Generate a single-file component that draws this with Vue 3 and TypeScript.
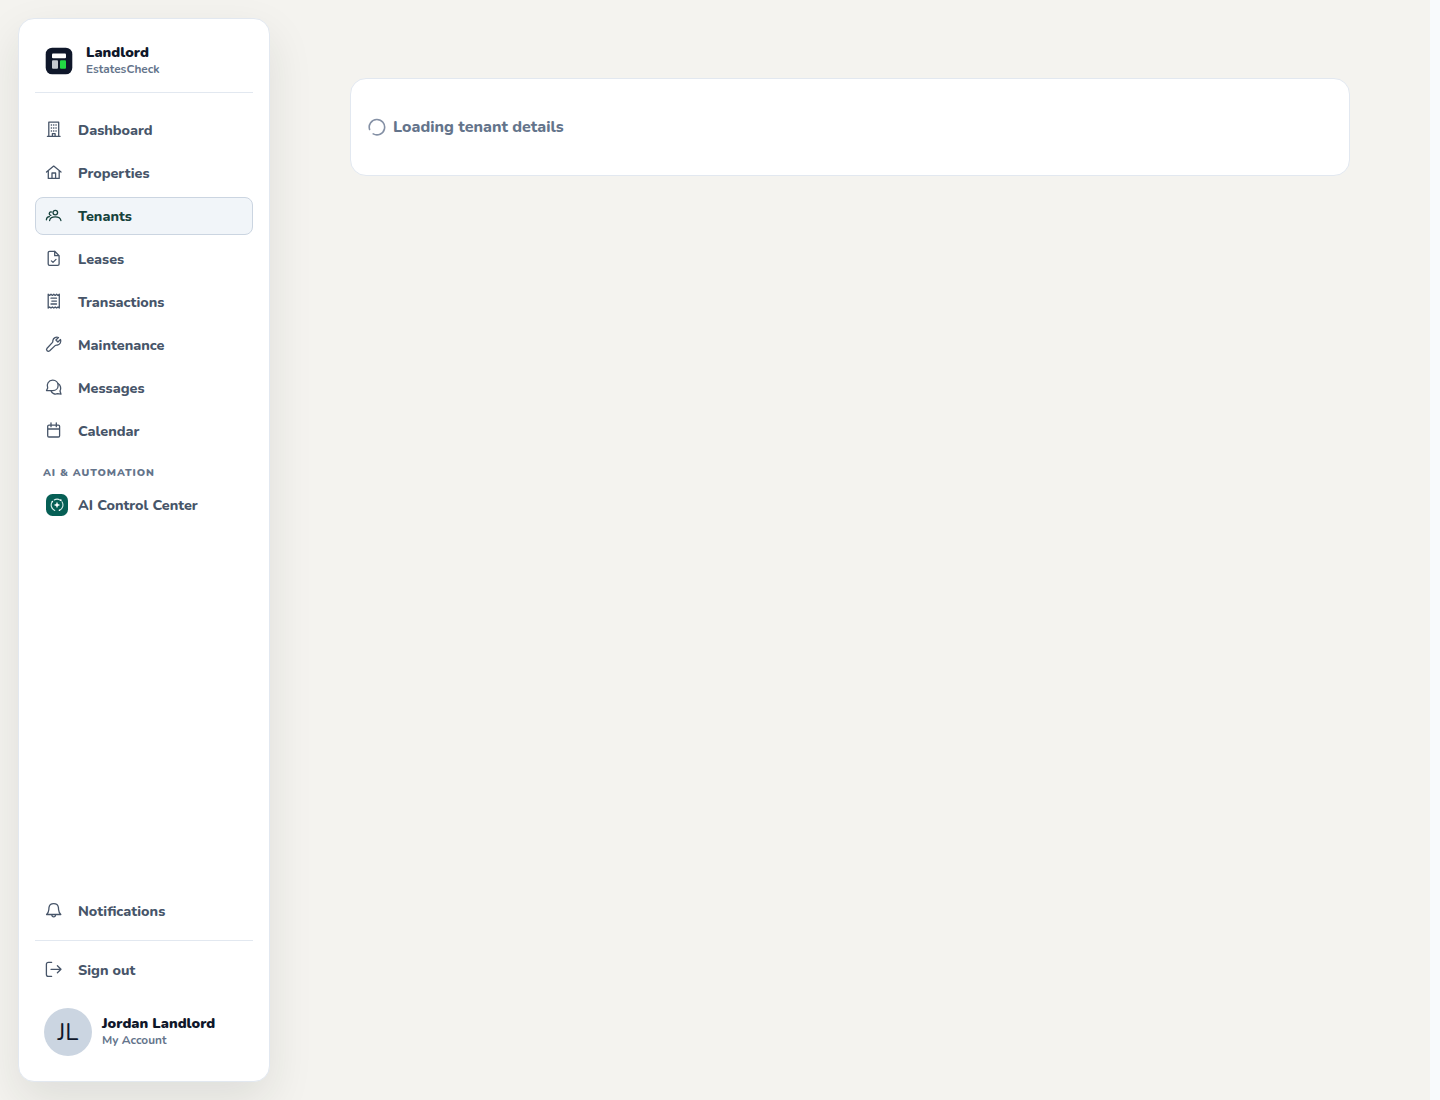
<script setup lang="ts">
interface NavItem {
  label: string
  paths: string[]
  active?: boolean
}

const mainNav: NavItem[] = [
  {
    label: 'Dashboard',
    paths: [
      'M3.8 16V2.2H13.7V16M2.4 16.3H15.1M7.4 16V13.6H10.1V16',
      'M6.3 5H6.6M8.6 5H8.9M10.9 5H11.2M6.3 8H6.6M8.6 8H8.9M10.9 8H11.2M6.3 11H6.6M8.6 11H8.9M10.9 11H11.2',
    ],
  },
  {
    label: 'Properties',
    paths: ['M1.5 9L8.7 3.1L16 9M3.3 7.8V15.4H14.2V7.8M7 15.2V10H10.6V15.2'],
  },
  {
    label: 'Tenants',
    active: true,
    paths: [
      'M12.6 6.6A2.3 2.3 0 1 1 8 6.6A2.3 2.3 0 1 1 12.6 6.6Z',
      'M4.6 14.5C5.2 9.6 15.2 9.6 15.9 14.5M6.6 6C4.8 5.4 3.6 7.2 4.6 8.7C5 9.2 5.4 9.3 5.9 9.3M1.4 13.8C1.5 11.9 2.6 10.8 4.4 10.7',
    ],
  },
  {
    label: 'Leases',
    paths: [
      'M9.7 2.3H4.6C3.7 2.3 3.2 2.9 3.2 3.7V14.9C3.2 15.8 3.8 16.3 4.6 16.3H12.7C13.6 16.3 14.1 15.7 14.1 14.9V6.7L9.7 2.3V6.7H14.1',
      'M6.4 11.9L8 13.4L11 10.4',
    ],
  },
  {
    label: 'Transactions',
    paths: [
      'M3.2 2.2L4.6 3.4L6 2.2L7.4 3.4L8.8 2.2L10.2 3.4L11.6 2.2L13 3.4L14.3 2.2V16L13 14.9L11.6 16L10.2 14.9L8.8 16L7.4 14.9L6 16L4.6 14.9L3.2 16Z',
      'M6 6.2H11.5M6.8 9.1H11.5M6 12H11.5',
    ],
  },
  {
    label: 'Maintenance',
    paths: [
      'M13.5 2.5C11.2 1.4 8.3 2.9 7.9 5.4C7.8 6.2 8 6.8 7.5 7.4L2.1 13.2C0.5 15.1 2.8 17.4 4.7 15.8L10.4 10.4C11 9.9 11.6 10.1 12.5 10C15 9.6 16.5 6.8 15.5 4.5L12.9 7L10.9 5L13.5 2.5Z',
    ],
  },
  {
    label: 'Messages',
    paths: [
      'M7.7 2.2C10.9 2.2 13.1 4.6 13.1 7.4C13.1 10.3 10.9 12.6 7.8 12.6H1.5L2.7 10C1.1 6.4 3.6 2.2 7.7 2.2Z',
      'M13 5.5C15.7 7 16.4 10.4 15 13L16 16.2L12.5 15.7C9.8 16.8 6.9 15.4 6 12.8',
    ],
  },
  {
    label: 'Calendar',
    paths: ['M4 4.1H13.4C14.1 4.1 14.6 4.6 14.6 5.3V14.7C14.6 15.5 14.1 16 13.4 16H4C3.2 16 2.7 15.5 2.7 14.7V5.3C2.7 4.6 3.2 4.1 4 4.1ZM2.7 8H14.6M6 1.8V5.7M11.3 1.8V5.7'],
  },
]

const notifications: NavItem = {
  label: 'Notifications',
  paths: ['M1.6 13.5H15.8C14.3 12.2 13.8 11 13.6 8.8L13.4 6.3C13 3.7 11.3 2.6 8.7 2.6C6.1 2.6 4.4 3.7 4 6.3L3.8 8.8C3.6 11 3.1 12.2 1.6 13.5ZM6.8 13.8C6.9 15.1 7.6 15.9 8.7 15.9C9.8 15.9 10.5 15.1 10.6 13.8'],
}

const signOut: NavItem = {
  label: 'Sign out',
  paths: ['M6.6 2.4H3.4C2.1 2.4 1.4 3.1 1.4 4.4V14.5C1.4 15.8 2.1 16.4 3.4 16.4H6.6M6 9.3H16M12.4 5.8L16 9.3L12.4 12.8'],
}
</script>

<template>
  <div class="shell">
    <aside class="sidebar">
      <header class="brand">
        <svg class="logo" viewBox="0 0 28 28">
          <rect x=".7" y=".7" width="26.6" height="26.6" rx="6.5" fill="#0f172a" />
          <rect x="7" y="6.5" width="14" height="4.7" rx="1" fill="#fff" />
          <rect x="7" y="13.2" width="6" height="8.5" rx="1" fill="#c5c9d1" />
          <rect x="15" y="13.2" width="6" height="8.5" rx="1" fill="#22d943" />
        </svg>
        <div class="stack">
          <strong class="title">Landlord</strong>
          <span class="sub">EstatesCheck</span>
        </div>
      </header>

      <nav class="nav">
        <a v-for="item in mainNav" :key="item.label" class="item" :class="{ active: item.active }">
          <svg class="icon" viewBox="0 0 18 18"><path v-for="d in item.paths" :key="d" :d="d" /></svg>
          <span class="label">{{ item.label }}</span>
        </a>
      </nav>

      <h2 class="section">AI &amp; AUTOMATION</h2>
      <a class="item ai">
        <svg class="ai-icon" viewBox="0 0 22 22">
          <rect width="22" height="22" rx="6.5" fill="#065f55" />
          <g fill="none" stroke="#d8efea" stroke-width="1.1" stroke-linecap="round">
            <path d="M8.8 16.4A5.8 5.8 0 0 1 6.1 7.9M8.2 5.9A5.8 5.8 0 0 1 14.1 6.1M16 7.8A5.8 5.8 0 0 1 13.6 16.2" />
          </g>
          <path d="M11 7.8L11.9 10.1L14.2 11L11.9 11.9L11 14.2L10.1 11.9L7.8 11L10.1 10.1Z" fill="#fff" />
          <circle cx="14.8" cy="6.2" r=".9" fill="#fff" /><circle cx="6.4" cy="7.6" r=".8" fill="#fff" />
          <circle cx="13.4" cy="16.2" r=".8" fill="#fff" />
        </svg>
        <span class="label">AI Control Center</span>
      </a>

      <div class="footer">
        <a class="item">
          <svg class="icon" viewBox="0 0 18 18"><path v-for="d in notifications.paths" :key="d" :d="d" /></svg>
          <span class="label">{{ notifications.label }}</span>
        </a>
        <div class="rule"></div>
        <a class="item">
          <svg class="icon" viewBox="0 0 18 18"><path v-for="d in signOut.paths" :key="d" :d="d" /></svg>
          <span class="label">{{ signOut.label }}</span>
        </a>
        <div class="account">
          <span class="avatar">JL</span>
          <div class="stack">
            <strong class="title">Jordan Landlord</strong>
            <span class="sub">My Account</span>
          </div>
        </div>
      </div>
    </aside>

    <main class="content">
      <section class="loading">
        <svg class="spinner" viewBox="0 0 18 18"><path d="M1.6 11.5A7.7 7.7 0 1 1 5.2 15.9" /></svg>
        <span>Loading tenant details</span>
      </section>
    </main>
  </div>
</template>

<style>
body {
  margin: 0;
  background: #f8fafc;
}
</style>

<style scoped>
.shell {
  box-sizing: border-box;
  display: flex;
  width: 1430px;
  height: 1100px;
  padding: 18px;
  overflow: hidden;
  background: #f4f3ef;
  font-family: Nunito, 'Noto Sans', 'Open Sans', sans-serif;
}
.sidebar {
  box-sizing: border-box;
  display: flex;
  flex-direction: column;
  flex: none;
  width: 252px;
  height: 1064px;
  padding: 16px;
  border: 1px solid #e2e8f0;
  border-radius: 16px;
  background: #fff;
  box-shadow: 0 18px 45px rgba(30, 36, 30, 0.1);
}
.brand {
  box-sizing: border-box;
  display: flex;
  gap: 13px;
  height: 58px;
  padding: 8px 10px 0;
  border-bottom: 1px solid #e2e8f0;
}
.logo {
  width: 28px;
  height: 28px;
  margin-top: 4px;
}
.stack {
  display: flex;
  flex-direction: column;
  white-space: nowrap;
}
.title {
  color: #0f172a;
  font-size: 14.4px;
  font-weight: 900;
  line-height: 18px;
}
.sub {
  color: #64748b;
  font-size: 11.84px;
  font-weight: 700;
  line-height: 16px;
}
.nav {
  display: flex;
  flex-direction: column;
  gap: 5px;
  margin-top: 18px;
}
.item {
  box-sizing: border-box;
  display: flex;
  flex: none;
  align-items: center;
  gap: 15px;
  height: 38px;
  padding: 0 9px;
  border: 1px solid transparent;
  border-radius: 8px;
  color: #475569;
}
.item.active {
  border-color: #cbd5e1;
  background: #f1f5f9;
  color: #16423c;
}
.icon {
  width: 18px;
  height: 18px;
  margin-bottom: 2px;
  fill: none;
  stroke: currentColor;
  stroke-width: 1.3;
  stroke-linecap: round;
  stroke-linejoin: round;
}
.label {
  font-size: 14.4px;
  font-weight: 800;
  line-height: 20px;
  white-space: nowrap;
}
.section {
  margin: 15px 8px 5px;
  color: #64748b;
  font-size: 10.4px;
  font-weight: 900;
  line-height: 16px;
  letter-spacing: 0.936px;
}
.item.ai {
  gap: 10px;
  padding-left: 10px;
}
.ai-icon {
  width: 22px;
  height: 22px;
}
.footer {
  margin-top: auto;
}
.rule {
  height: 1px;
  margin: 10px 0;
  background: #e2e8f0;
}
.account {
  display: flex;
  gap: 10px;
  padding: 19px 9px 9px;
}
.avatar {
  display: flex;
  align-items: center;
  justify-content: center;
  width: 48px;
  height: 48px;
  border-radius: 50%;
  background: #cbd5e1;
  color: #0f172a;
  font-size: 24px;
}
.account .stack {
  margin-top: 6px;
}
.content {
  flex: 1;
  padding: 60px 62px 0 80px;
}
.loading {
  box-sizing: border-box;
  display: flex;
  align-items: center;
  gap: 7px;
  height: 98px;
  padding: 0 17px;
  border: 1px solid #e2e8f0;
  border-radius: 16px;
  background: #fff;
  color: #64748b;
  font-size: 16px;
  font-weight: 800;
}
.spinner {
  width: 18px;
  height: 18px;
  fill: none;
  stroke: #8490a5;
  stroke-width: 1.6;
  stroke-linecap: round;
}
</style>
